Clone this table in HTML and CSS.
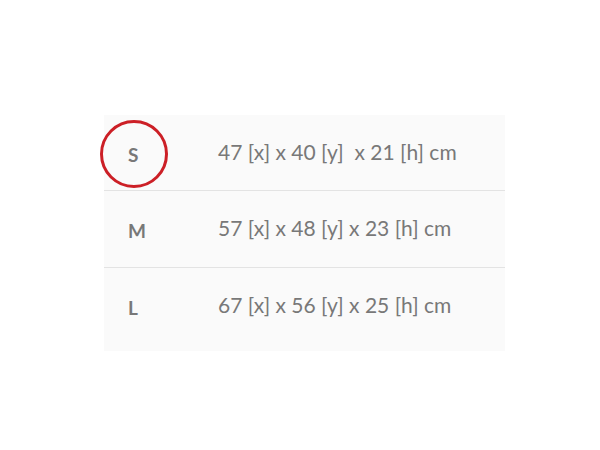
FILE: index.html
```html
<!DOCTYPE html>
<html>
<head>
<meta charset="utf-8">
<link rel="stylesheet" href="styles.css">
</head>
<body>
<div class="page">
  <div class="sizes">
    <div class="row r1">
      <div class="size"><span class="mark">S</span></div>
      <div class="dims">47 [x] x 40 [y]&nbsp; x 21 [h] cm</div>
    </div>
    <div class="row r2">
      <div class="size">M</div>
      <div class="dims">57 [x] x 48 [y] x 23 [h] cm</div>
    </div>
    <div class="row r3">
      <div class="size">L</div>
      <div class="dims">67 [x] x 56 [y] x 25 [h] cm</div>
    </div>
  </div>
</div>
</body>
</html>
```
FILE: styles.css
```css
html, body { margin: 0; padding: 0; background: #fff; }
body { font-family: Lato, "Open Sans", sans-serif; color: #787878; }
.page { width: 600px; height: 450px; padding-top: 115px; box-sizing: border-box; }
.sizes { margin-left: 104px; width: 401px; background: #fafafa; }
.row { display: flex; align-items: flex-start; box-sizing: border-box; padding-top: 24px; }
.row + .row { border-top: 1px solid #e3e3e3; }
.r1 { height: 75px; }
.r2 { height: 77px; }
.r3 { height: 84px; }
.size { width: 114px; padding: 3px 0 0 24px; box-sizing: border-box; font-weight: 700; font-size: 19px; line-height: 26px; }
.mark { position: relative; }
.mark::before {
  content: ""; position: absolute; left: -28px; top: -23px; width: 68px; height: 68px;
  border: 3px solid #cc1f26; border-radius: 50%; box-sizing: border-box;
}
.dims { font-size: 21px; line-height: 26px; }
```
